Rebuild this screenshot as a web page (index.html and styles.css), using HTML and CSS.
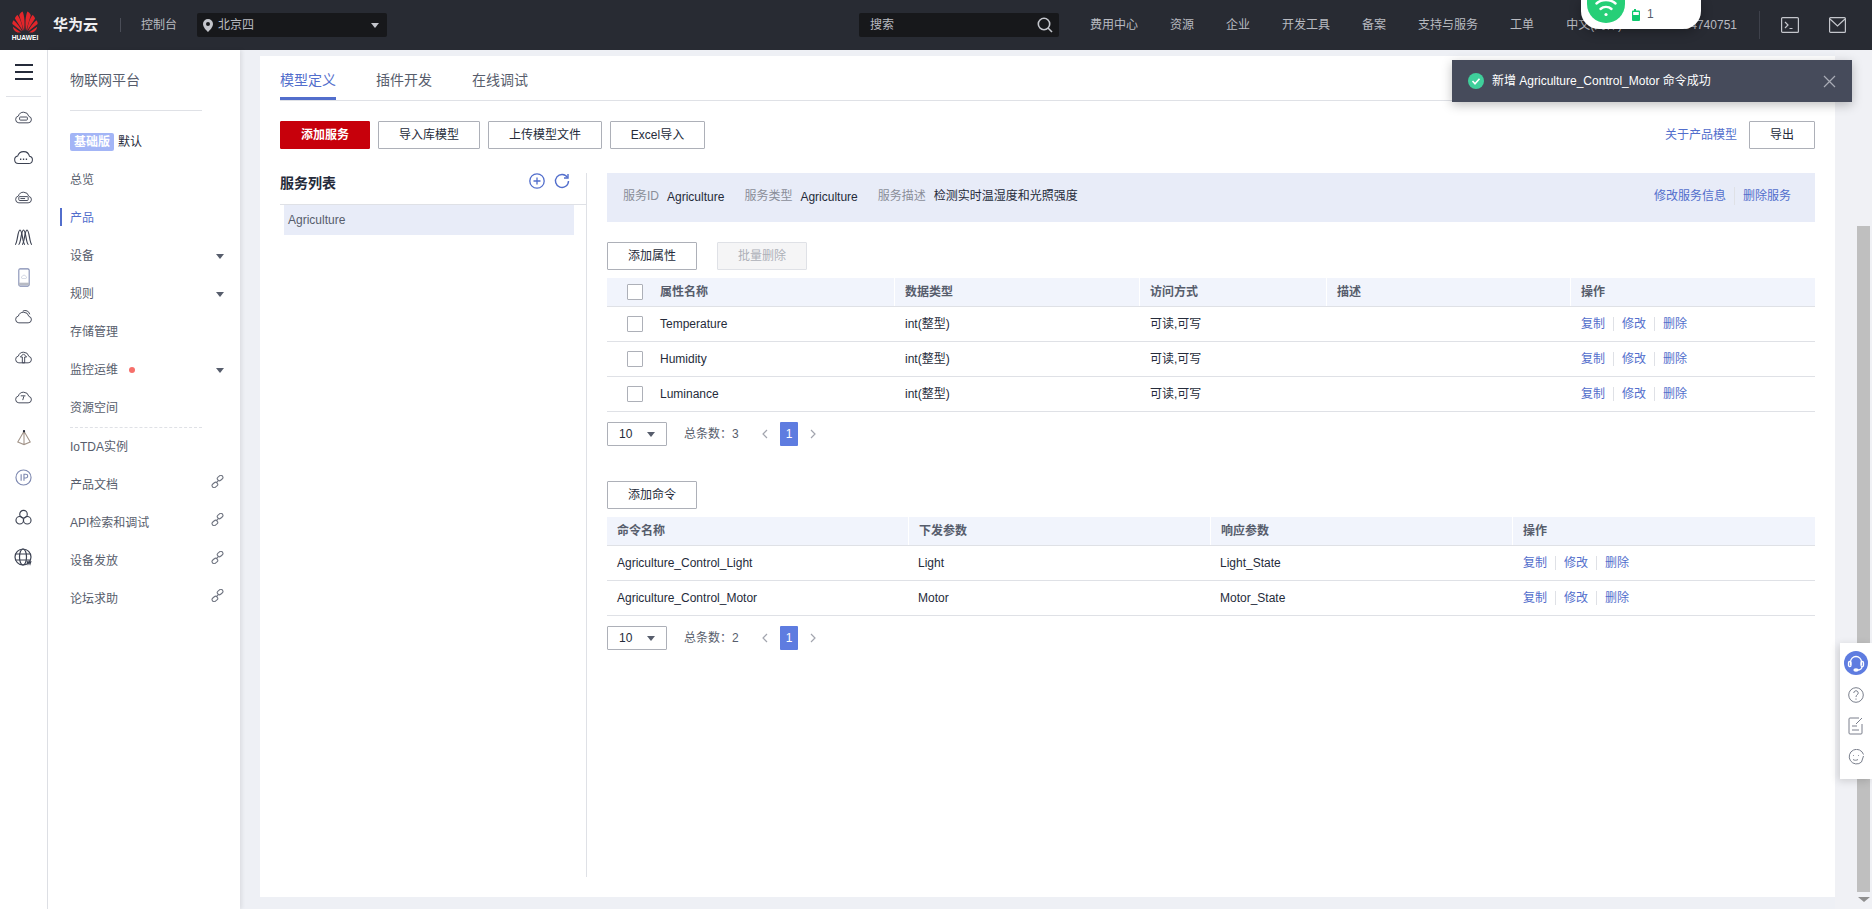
FILE: index.html
```html
<!DOCTYPE html>
<html lang="zh-CN">
<head>
<meta charset="utf-8">
<title>华为云 - 物联网平台</title>
<link rel="stylesheet" href="styles.css">
</head>
<body>
<svg class="defs" width="0" height="0" aria-hidden="true">
  <symbol id="cloud" viewBox="0 0 24 18"><path d="M6 16.500h12a4.200 4.200 0 0 0 .9-8.300A7 7 0 0 0 5.400 7.800 4.400 4.400 0 0 0 6 16.500z"/></symbol>
  <symbol id="link" viewBox="0 0 12 12"><rect x="5.600" y="0.900" width="5.600" height="3.800" rx="1.900" transform="rotate(-40 8.400 2.800)"/><rect x="0.800" y="7.300" width="5.600" height="3.800" rx="1.900" transform="rotate(-40 3.600 9.200)"/><path d="M4.600 7.400 7.400 4.600"/></symbol>
</svg>

<header class="topbar">
  <div class="logo">
    <svg class="logo-mark" width="26" height="22" viewBox="0 0 26 22">
      <g fill="#e3262b">
        <path d="M12 20 7.200 4.200C8 2 9.500 1 10.600 0.600 12.600 5 13 13 12 20z"/>
        <path d="M14 20 18.800 4.200C18 2 16.500 1 15.400 0.600 13.400 5 13 13 14 20z"/>
        <path d="M11 20 2.900 7.600C3.200 6 4.400 4.600 5.600 4 8.400 8 10.400 14 11 20z"/>
        <path d="M15 20 23.100 7.600C22.800 6 21.600 4.600 20.400 4 17.600 8 15.600 14 15 20z"/>
        <path d="M10 20.400 0.400 13C0.200 11.800 0.800 10.200 1.700 9.200 5 12.400 8.400 16.400 10 20.400z"/>
        <path d="M16 20.400 25.600 13C25.800 11.800 25.200 10.200 24.300 9.200 21 12.400 17.600 16.400 16 20.400z"/>
        <path d="M9 21.400 0.900 15.800C1 17.600 2 19.600 3.600 20.400 5.400 21.600 7.400 21.800 9 21.400z"/>
        <path d="M17 21.400 25.100 15.800C25 17.600 24 19.600 22.400 20.400 20.600 21.600 18.600 21.800 17 21.400z"/>
      </g>
    </svg>
    <span class="logo-word">HUAWEI</span>
  </div>
  <span class="brand">华为云</span>
  <span class="top-rule"></span>
  <span class="console">控制台</span>
  <div class="region">
    <svg width="10" height="13" viewBox="0 0 10 13"><path fill="#c4c6cc" fill-rule="evenodd" d="M5 0a5 5 0 0 1 5 5c0 3-3 6-5 8-2-2-5-5-5-8a5 5 0 0 1 5-5zm0 3a2 2 0 1 0 0 4 2 2 0 0 0 0-4z"/></svg>
    <span>北京四</span>
    <i class="caret caret-light"></i>
  </div>
  <div class="search">
    <span>搜索</span>
    <svg width="16" height="16" viewBox="0 0 16 16" fill="none" stroke="#c4c6cc" stroke-width="1.600"><circle cx="7" cy="7" r="5.700"/><path d="m11 11 4 4"/></svg>
  </div>
  <nav class="top-nav">
    <a>费用中心</a><a>资源</a><a>企业</a><a>开发工具</a><a>备案</a><a>支持与服务</a><a>工单</a><a>中文(简体)</a>
  </nav>
  <div class="top-tail">
    <span class="phone">hw13384740751</span>
    <span class="tail-rule"></span>
    <svg class="tail-term" width="18" height="16" viewBox="0 0 18 16" fill="none" stroke="#c4c6cc" stroke-width="1.200"><rect x="0.600" y="0.600" width="16.800" height="14.800" rx="1"/><path d="m4 5 3 3-3 3M8.500 11.500h3"/></svg>
    <svg class="tail-mail" width="17" height="16" viewBox="0 0 17 16" fill="none" stroke="#c4c6cc" stroke-width="1.200"><rect x="0.600" y="0.600" width="15.800" height="14.800" rx="1"/><path d="m1 2 7.500 7L16 2"/></svg>
  </div>
</header>

<div class="pop">
  <div class="pop-circle">
    <svg width="38" height="23" viewBox="0 0 38 23" fill="none" stroke="#fff" stroke-width="2.400" stroke-linecap="round"><path d="M9.500 3.500c5-4.600 14-4.600 19 0"/><path d="M13.500 9c3-2.800 8-2.800 11 0"/><circle cx="19" cy="14.500" r="1.600" fill="#fff" stroke="none"/></svg>
  </div>
  <svg class="pop-batt" width="8" height="12" viewBox="0 0 8 12"><path fill="#10c96f" d="M2 0h2v1.500h3a1 1 0 0 1 1 1V11a1 1 0 0 1-1 1H1a1 1 0 0 1-1-1V2.500a1 1 0 0 1 1-1h1z"/><rect x="1.200" y="3" width="5.600" height="3" fill="#fff"/></svg>
  <span class="pop-num">1</span>
</div>

<div class="main">
  <aside class="rail">
    <div class="rail-head"><span class="burger"><i></i><i></i><i></i></span></div>
    <div class="rail-icons">
      <span class="rail-item"><svg width="19" height="14" viewBox="0 0 24 18" class="ri"><use href="#cloud"/><rect x="7" y="9" width="10" height="4" rx="1"/></svg></span>
      <span class="rail-item"><svg width="21" height="16" viewBox="0 0 24 18" class="ri"><use href="#cloud"/><path d="M8 11.500h1.500M11.300 11.500h1.500M14.600 11.500h1.500" stroke-width="1.800"/></svg></span>
      <span class="rail-item"><svg width="19" height="14" viewBox="0 0 24 18" class="ri"><use href="#cloud"/><rect x="6" y="8.500" width="12" height="5" rx="1"/><path d="M8 11h6"/></svg></span>
      <span class="rail-item"><svg width="19" height="16" viewBox="0 0 19 16" class="ri"><path d="M1 15.500C3.500 15.500 3.500 1 6 1s2.500 14.500 5 14.500"/><path d="M4.500 15.500C7 15.500 7 1 9.500 1s2.500 14.500 5 14.500"/><path d="M8 15.500C10.500 15.500 10.500 1 13 1s2.500 14.500 5 14.500"/></svg></span>
      <span class="rail-item"><svg width="14" height="19" viewBox="0 0 14 22" class="ri ri-blue"><rect x="1" y="1" width="12" height="20" rx="1.500"/><path d="M1 18.500h12" stroke="#b8bbc4" stroke-width="3"/><use href="#cloud" x="3.500" y="7" width="7" height="6"/></svg></span>
      <span class="rail-item"><svg width="19" height="14" viewBox="0 0 24 18" class="ri"><use href="#cloud"/><path d="M11 1.500a6 6 0 0 1 9 4"/></svg></span>
      <span class="rail-item"><svg width="19" height="14" viewBox="0 0 24 18" class="ri"><use href="#cloud"/><path d="m8 9 4-4 4 4h-2.500v7.500h-3V9z"/></svg></span>
      <span class="rail-item"><svg width="19" height="14" viewBox="0 0 24 18" class="ri"><use href="#cloud"/><path d="m11 13 1.500-5M8.500 7.500h6"/></svg></span>
      <span class="rail-item"><svg width="16" height="17" viewBox="0 0 18 18" class="ri ri-amber"><path d="M9 2 2 14l7 3 7-3zM9 2v15"/><circle cx="9" cy="2" r="1.300" fill="#252b3a" stroke="none"/></svg></span>
      <span class="rail-item"><svg width="17" height="17" viewBox="0 0 18 18" class="ri ri-blue"><circle cx="9" cy="9" r="8"/><path d="M6.500 5.500v7M9.500 12.500v-7h2a2 2 0 0 1 0 4h-2"/></svg></span>
      <span class="rail-item"><svg width="17" height="16" viewBox="0 0 18 17" class="ri"><circle cx="9" cy="5.500" r="4"/><circle cx="5" cy="12" r="4"/><circle cx="13" cy="12" r="4"/></svg></span>
      <span class="rail-item"><svg width="19" height="18" viewBox="0 0 19 18" class="ri"><circle cx="9" cy="9" r="8"/><ellipse cx="9" cy="9" rx="3.500" ry="8"/><path d="M1.500 6h15M1.500 12h15"/><path d="m13 13 1 3 1-2.500 1 2.500 1-3" stroke-width="1.200"/></svg></span>
    </div>
  </aside>

  <aside class="nav">
    <div class="nav-title">物联网平台</div>
    <div class="nav-edition"><span class="badge">基础版</span><span>默认</span></div>
    <a class="nav-item">总览</a>
    <a class="nav-item is-active">产品</a>
    <a class="nav-item">设备<i class="caret caret-nav"></i></a>
    <a class="nav-item">规则<i class="caret caret-nav"></i></a>
    <a class="nav-item">存储管理</a>
    <a class="nav-item">监控运维<b class="dot"></b><i class="caret caret-nav"></i></a>
    <a class="nav-item">资源空间</a>
    <div class="nav-sep"></div>
    <a class="nav-item">IoTDA实例</a>
    <a class="nav-item">产品文档<svg class="chain" width="13" height="13"><use href="#link"/></svg></a>
    <a class="nav-item">API检索和调试<svg class="chain" width="13" height="13"><use href="#link"/></svg></a>
    <a class="nav-item">设备发放<svg class="chain" width="13" height="13"><use href="#link"/></svg></a>
    <a class="nav-item">论坛求助<svg class="chain" width="13" height="13"><use href="#link"/></svg></a>
  </aside>

  <div class="stage">
    <main class="panel">
      <div class="tabs">
        <a class="tab is-active">模型定义</a>
        <a class="tab">插件开发</a>
        <a class="tab">在线调试</a>
      </div>

      <div class="toolbar">
        <button class="btn btn-primary">添加服务</button>
        <button class="btn btn-import">导入库模型</button>
        <button class="btn btn-upload">上传模型文件</button>
        <button class="btn btn-excel">Excel导入</button>
        <a class="link toolbar-link">关于产品模型</a>
        <button class="btn btn-export">导出</button>
      </div>

      <div class="split">
        <section class="services">
          <div class="services-head">
            <h2>服务列表</h2>
            <svg width="16" height="16" viewBox="0 0 16 16" fill="none" stroke="#526ecc" stroke-width="1.300"><circle cx="8" cy="8" r="7.200"/><path d="M8 4.500v7M4.500 8h7"/></svg>
            <svg class="refresh" width="16" height="16" viewBox="0 0 16 16" fill="none" stroke="#526ecc" stroke-width="1.400"><path d="M13.500 4.500A6.500 6.500 0 1 0 14.500 8"/><path d="M14 1v4h-4"/></svg>
          </div>
          <div class="service-item">Agriculture</div>
        </section>

        <section class="detail">
          <div class="info">
            <span class="info-key">服务ID</span><span class="info-val val-latin">Agriculture</span>
            <span class="info-key">服务类型</span><span class="info-val val-latin">Agriculture</span>
            <span class="info-key">服务描述</span><span class="info-val info-desc">检测实时温湿度和光照强度</span>
            <span class="info-actions"><a class="link">修改服务信息</a><i class="info-rule"></i><a class="link">删除服务</a></span>
          </div>

          <div class="btn-row">
            <button class="btn btn-wide">添加属性</button>
            <button class="btn btn-wide btn-disabled">批量删除</button>
          </div>

          <div class="table table-props">
            <div class="row head">
              <div class="cell cell-check"><span class="check"></span>属性名称</div>
              <div class="cell">数据类型</div><div class="cell">访问方式</div><div class="cell">描述</div><div class="cell">操作</div>
            </div>
            <div class="row">
              <div class="cell cell-check"><span class="check"></span>Temperature</div>
              <div class="cell">int(整型)</div><div class="cell">可读,可写</div><div class="cell"></div>
              <div class="cell ops"><a class="link">复制</a><i></i><a class="link">修改</a><i></i><a class="link">删除</a></div>
            </div>
            <div class="row">
              <div class="cell cell-check"><span class="check"></span>Humidity</div>
              <div class="cell">int(整型)</div><div class="cell">可读,可写</div><div class="cell"></div>
              <div class="cell ops"><a class="link">复制</a><i></i><a class="link">修改</a><i></i><a class="link">删除</a></div>
            </div>
            <div class="row">
              <div class="cell cell-check"><span class="check"></span>Luminance</div>
              <div class="cell">int(整型)</div><div class="cell">可读,可写</div><div class="cell"></div>
              <div class="cell ops"><a class="link">复制</a><i></i><a class="link">修改</a><i></i><a class="link">删除</a></div>
            </div>
          </div>
          <div class="pager">
            <div class="size">10<i class="caret caret-nav"></i></div>
            <span class="total">总条数：3</span>
            <svg class="chev" width="7" height="10" viewBox="0 0 7 10"><path d="M6 1 2 5l4 4"/></svg>
            <span class="page">1</span>
            <svg class="chev" width="7" height="10" viewBox="0 0 7 10"><path d="m1 1 4 4-4 4"/></svg>
          </div>

          <div class="btn-row btn-row-cmd">
            <button class="btn btn-wide">添加命令</button>
          </div>

          <div class="table table-cmds">
            <div class="row head">
              <div class="cell">命令名称</div><div class="cell">下发参数</div><div class="cell">响应参数</div><div class="cell">操作</div>
            </div>
            <div class="row">
              <div class="cell">Agriculture_Control_Light</div><div class="cell">Light</div><div class="cell">Light_State</div>
              <div class="cell ops"><a class="link">复制</a><i></i><a class="link">修改</a><i></i><a class="link">删除</a></div>
            </div>
            <div class="row">
              <div class="cell">Agriculture_Control_Motor</div><div class="cell">Motor</div><div class="cell">Motor_State</div>
              <div class="cell ops"><a class="link">复制</a><i></i><a class="link">修改</a><i></i><a class="link">删除</a></div>
            </div>
          </div>
          <div class="pager">
            <div class="size">10<i class="caret caret-nav"></i></div>
            <span class="total">总条数：2</span>
            <svg class="chev" width="7" height="10" viewBox="0 0 7 10"><path d="M6 1 2 5l4 4"/></svg>
            <span class="page">1</span>
            <svg class="chev" width="7" height="10" viewBox="0 0 7 10"><path d="m1 1 4 4-4 4"/></svg>
          </div>
        </section>
      </div>
    </main>
    <div class="scroll">
      <div class="thumb"></div>
      <i class="caret caret-scroll"></i>
    </div>
  </div>
</div>

<div class="toast">
  <svg width="16" height="16" viewBox="0 0 16 16"><circle cx="8" cy="8" r="8" fill="#3fcf9b"/><path d="m4.500 8 2.500 2.700 4.500-5" fill="none" stroke="#fff" stroke-width="1.600"/></svg>
  <span class="toast-text">新增 Agriculture_Control_Motor 命令成功</span>
  <svg class="toast-x" width="13" height="13" viewBox="0 0 13 13" fill="none" stroke="#a9acb6" stroke-width="1.200"><path d="m1 1 11 11M12 1 1 12"/></svg>
</div>

<div class="float">
  <span class="float-main">
    <svg width="18" height="18" viewBox="0 0 18 18" fill="none" stroke="#fff" stroke-width="1.300"><path d="M3.500 11V8a5.500 5.500 0 0 1 11 0v3"/><rect x="1.500" y="7.500" width="2.500" height="5" rx="1.200"/><rect x="14" y="7.500" width="2.500" height="5" rx="1.200"/><path d="M15 12.500c0 2.500-2.500 3.500-5 3.500"/><ellipse cx="9" cy="16" rx="2" ry="1" fill="#fff"/></svg>
  </span>
  <svg class="float-ico float-first" width="16" height="16" viewBox="0 0 16 16"><circle cx="8" cy="8" r="7.300"/><path d="M5.800 6a2.200 2.200 0 1 1 3.400 1.800C8.400 8.400 8 8.800 8 10"/><path d="M8 11.500v1.200"/></svg>
  <svg class="float-ico" width="16" height="18" viewBox="0 0 16 18"><path d="M11 1H2a1 1 0 0 0-1 1v14a1 1 0 0 0 1 1h11a1 1 0 0 0 1-1V7"/><path d="M4 9h5M4 13h7M8 7l6-6"/></svg>
  <svg class="float-ico" width="17" height="16" viewBox="0 0 17 16"><path d="M15.500 5.500A7.300 7.300 0 1 0 13.500 13l2-6"/><path d="M5 6.500h.8M10 6.500h.8M5 10.500c1.500 1 3.500 1 5 0"/></svg>
</div>
</body>
</html>
```

FILE: styles.css
```css
* { box-sizing: border-box; }

html, body {
  margin: 0;
  height: 100%;
  overflow: hidden;
}

body {
  display: flex;
  flex-direction: column;
  font: 12px/16px "Liberation Sans", "Noto Sans CJK SC", sans-serif;
  color: #252b3a;
  background: #eef0f5;
}

.defs { position: absolute; }

a { cursor: pointer; }

.caret {
  display: inline-block;
  flex: none;
  width: 0;
  height: 0;
  border-style: solid;
  border-width: 5px 4px 0;
  border-color: #575d6c transparent transparent;
}

.caret-light { border-top-color: #c4c6cc; margin-left: auto; margin-right: 2px; }

/* top bar */
.topbar {
  flex: none;
  display: flex;
  align-items: center;
  height: 50px;
  padding-left: 12px;
  background: #282b33;
  color: #b9bbc1;
}

.logo {
  width: 26px;
  display: flex;
  flex-direction: column;
  align-items: center;
  margin-top: 2px;
}

.logo-word {
  font-size: 7px;
  line-height: 9px;
  color: #fff;
  font-weight: 700;
  transform: scaleX(.95);
}

.brand {
  margin-left: 15px;
  width: 67px;
  font-size: 15px;
  font-weight: 700;
  color: #f0f0f2;
}

.top-rule {
  width: 1px;
  height: 14px;
  background: #4a4d57;
}

.console { margin-left: 20px; }

.region {
  display: flex;
  align-items: center;
  gap: 5px;
  width: 190px;
  height: 24px;
  margin-left: 20px;
  padding: 0 6px;
  background: #17181b;
  border-radius: 2px;
}

.search {
  display: flex;
  align-items: center;
  justify-content: space-between;
  width: 200px;
  height: 24px;
  margin-left: 472px;
  padding: 0 6px 0 11px;
  background: #17181b;
  border-radius: 2px;
}

.top-nav {
  display: flex;
  gap: 32px;
  margin-left: 31px;
  white-space: nowrap;
}

.top-tail {
  display: flex;
  align-items: center;
  margin-left: auto;
  padding-right: 26px;
}

.phone { margin-right: 22px; }

.tail-rule {
  width: 1px;
  height: 28px;
  background: #3e414b;
}

.tail-term { margin-left: 21px; }
.tail-mail { margin-left: 30px; }

/* white popup peeking from the top edge */
.pop {
  position: absolute;
  top: 0;
  left: 1581px;
  width: 120px;
  height: 29px;
  padding-left: 6px;
  display: flex;
  align-items: flex-start;
  background: #fff;
  border-radius: 0 0 18px 18px;
  box-shadow: 0 3px 12px rgba(0, 0, 0, .3);
  z-index: 5;
}

.pop-circle {
  width: 38px;
  height: 23px;
  background: #26cf77;
  border-radius: 0 0 19px 19px / 0 0 19px 19px;
}

.pop-circle svg { display: block; }

.pop-batt { margin: 9px 0 0 7px; }

.pop-num {
  margin: 6px 0 0 7px;
  color: #575d6c;
}

/* layout */
.main {
  flex: 1;
  display: flex;
  min-height: 0;
}

/* icon rail */
.rail {
  flex: none;
  width: 48px;
  background: #fff;
  border-right: 1px solid #dfe1e6;
}

.rail-head {
  display: flex;
  justify-content: center;
  height: 47px;
  margin: 0 6px;
  padding-top: 14px;
  border-bottom: 1px solid #dfe1e6;
}

.burger {
  display: flex;
  flex-direction: column;
  gap: 5px;
  width: 18px;
}

.burger i {
  height: 2px;
  background: #252b3a;
}

.rail-item {
  display: flex;
  align-items: center;
  justify-content: center;
  height: 40px;
}

.ri {
  fill: none;
  stroke: #3c4252;
  stroke-width: 1.200;
}

.ri-blue { stroke: #7d88b0; }
.ri-amber { stroke: #a3958a; }

/* side nav */
.nav {
  flex: none;
  width: 192px;
  background: #fff;
  color: #575d6c;
  box-shadow: 2px 0 4px rgba(0, 0, 0, .08);
  z-index: 1;
}

.nav-title {
  width: 132px;
  height: 61px;
  margin: 0 0 12px 22px;
  padding-top: 22px;
  font-size: 14px;
  line-height: 16px;
  border-bottom: 1px solid #dfe1e6;
}

.nav-edition,
.nav-item {
  display: flex;
  align-items: center;
  height: 38px;
  padding: 0 16px 0 22px;
}

.nav-edition { gap: 4px; color: #252b3a; }

.badge {
  width: 44px;
  height: 18px;
  line-height: 18px;
  text-align: center;
  color: #fff;
  font-weight: 700;
  background: #a3b5f6;
  border-radius: 2px;
}

.nav-item { position: relative; }

.nav-item .caret { margin-left: auto; }

.nav-item.is-active { color: #526ecc; }

.nav-item.is-active::before {
  content: "";
  position: absolute;
  left: 12px;
  top: 9px;
  width: 2px;
  height: 18px;
  background: #526ecc;
}

.dot {
  width: 6px;
  height: 6px;
  margin-left: 11px;
  border-radius: 50%;
  background: #f66f6a;
}

.chain {
  margin: 0 0 8px auto;
  fill: none;
  stroke: #6f7480;
  stroke-width: 1;
}

.nav-sep {
  height: 0;
  margin: 0 38px 0 22px;
  border-top: 1px dashed #dfe1e6;
}

/* stage */
.stage {
  flex: 1;
  display: flex;
  min-width: 0;
  padding: 6px 0 0 20px;
}

.panel {
  flex: none;
  display: flex;
  flex-direction: column;
  width: 1575px;
  height: 841px;
  padding: 0 20px;
  background: #fff;
}

.tabs {
  display: flex;
  gap: 40px;
  height: 45px;
  border-bottom: 1px solid #dfe1e6;
  font-size: 14px;
  color: #575d6c;
}

.tab {
  height: 44px;
  padding-top: 16px;
  line-height: 16px;
}

.tab.is-active {
  color: #526ecc;
  border-bottom: 3px solid #526ecc;
}

.toolbar {
  display: flex;
  align-items: center;
  gap: 8px;
  margin-top: 20px;
}

.btn {
  height: 28px;
  padding: 0;
  font: inherit;
  color: #252b3a;
  background: #fff;
  border: 1px solid #adb0b8;
  border-radius: 1px;
}

.btn-primary {
  width: 90px;
  font-weight: 700;
  color: #fff;
  background: #c7000b;
  border-color: #c7000b;
}

.btn-import { width: 102px; }
.btn-upload { width: 114px; }
.btn-excel { width: 95px; }
.btn-export { width: 66px; margin-left: 4px; }
.toolbar-link { margin-left: auto; }

.link { color: #526ecc; white-space: nowrap; }

.split {
  flex: 1;
  display: flex;
  min-height: 0;
  margin: 24px 0 20px;
}

/* service list */
.services {
  flex: none;
  width: 307px;
  border-right: 1px solid #dfe1e6;
}

.services-head {
  display: flex;
  align-items: flex-start;
  height: 32px;
  padding-right: 16px;
  border-bottom: 1px solid #dfe1e6;
}

.services-head h2 {
  margin: 1px auto 0 0;
  font-size: 14px;
  line-height: 18px;
  font-weight: 700;
  color: #252b3a;
}

.refresh { margin-left: 9px; }

.service-item {
  height: 30px;
  margin: 0 12px 0 4px;
  padding: 7px 4px;
  background: #e8ecf8;
  color: #575d6c;
}

/* detail */
.detail {
  flex: 1;
  min-width: 0;
  margin-left: 20px;
}

.info {
  display: flex;
  align-items: center;
  height: 49px;
  padding: 0 24px 4px 16px;
  background: #e8ecf8;
}

.info-key { color: #8a8e99; }

.info-val { margin-left: 8px; margin-right: 20px; }
.val-latin { padding-top: 2px; }
.info-desc { margin-right: 0; }

.info-actions {
  display: flex;
  align-items: center;
  margin-left: auto;
}

.info-rule {
  width: 1px;
  height: 18px;
  margin: 0 8px;
  background: #dfe1e6;
}

.btn-row {
  display: flex;
  gap: 20px;
  margin-top: 20px;
}

.btn-row-cmd { margin-top: 35px; }

.btn-wide { width: 90px; }

.btn-disabled {
  color: #adb0b8;
  background: #f5f5f6;
  border-color: #dfe1e6;
}

.table { margin-top: 8px; }

.row {
  display: grid;
  height: 35px;
  align-items: stretch;
  border-bottom: 1px solid #dfe1e6;
}

.table-props .row { grid-template-columns: 287px 245px 187px 244px 245px; }
.table-cmds .row { grid-template-columns: 301px 302px 302px 303px; }

.row.head {
  height: 29px;
  font-weight: 700;
  color: #575d6c;
  background: #f1f4fc;
}

.cell {
  display: flex;
  align-items: center;
  padding-left: 11px;
  white-space: nowrap;
}

.table-cmds .cell { padding-left: 10px; }
.table-cmds .cell.ops { padding-left: 11px; }

.row.head .cell + .cell {
  padding-left: 10px;
  border-left: 1px solid #fff;
}

.cell-check { padding-left: 20px; gap: 17px; }

.check {
  width: 16px;
  height: 16px;
  background: #fff;
  border: 1px solid #adb0b8;
  border-radius: 1px;
}

.ops i {
  width: 1px;
  height: 14px;
  margin: 0 8px;
  background: #dfe1e6;
}

/* pagination */
.pager {
  display: flex;
  align-items: center;
  height: 24px;
  margin-top: 10px;
}

.size {
  display: flex;
  align-items: center;
  justify-content: space-between;
  width: 60px;
  height: 24px;
  padding: 0 11px;
  border: 1px solid #adb0b8;
  border-radius: 1px;
}

.total {
  margin-left: 17px;
  width: 77px;
  color: #575d6c;
  white-space: nowrap;
}

.chev {
  fill: none;
  stroke: #a2a5ae;
  stroke-width: 1.200;
}

.page {
  width: 18px;
  height: 24px;
  margin: 0 12px;
  line-height: 24px;
  text-align: center;
  color: #fff;
  background: #5e7ce0;
  border-radius: 1px;
}

/* fake scrollbar */
.scroll {
  flex: 1;
  background: #f0f1f5;
  padding-left: 22px;
  margin-top: -6px;
}

.thumb {
  width: 13px;
  height: 666px;
  margin-top: 176px;
  background: #bfbfbf;
}

.caret-scroll {
  display: block;
  margin: 5px 0 0 1px;
  border-width: 5px 6px 0;
  border-top-color: #8f8f8f;
}

/* toast */
.toast {
  position: absolute;
  top: 60px;
  left: 1452px;
  width: 400px;
  height: 42px;
  display: flex;
  align-items: center;
  padding: 0 16px;
  color: #fff;
  background: #464b5b;
  box-shadow: 0 3px 10px rgba(0, 0, 0, .25);
  z-index: 6;
}

.toast-text { margin-left: 8px; }

.toast-x { margin-left: auto; }

/* floating help */
.float {
  position: absolute;
  top: 643px;
  left: 1840px;
  width: 32px;
  height: 136px;
  display: flex;
  flex-direction: column;
  align-items: center;
  padding-top: 8px;
  background: #fff;
  box-shadow: -2px 2px 8px rgba(0, 0, 0, .15);
  z-index: 6;
}

.float-main {
  display: flex;
  align-items: center;
  justify-content: center;
  width: 24px;
  height: 24px;
  border-radius: 50%;
  background: #5e7ce0;
}

.float-ico {
  flex: none;
  margin-top: 14px;
  fill: none;
  stroke: #7a7f8c;
  stroke-width: 1;
}

.float-first { margin-top: 12px; }
```
